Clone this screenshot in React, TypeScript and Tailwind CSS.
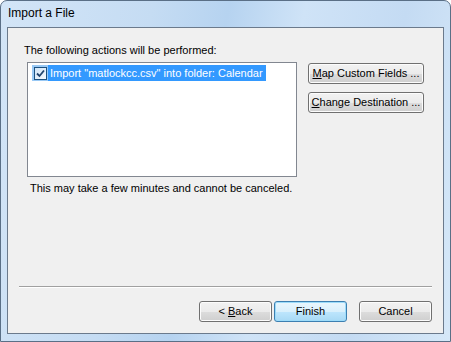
const FONT = { fontFamily: '"Liberation Sans", Arial, sans-serif' };

function Btn({ children, primary, w = "w-[73px]" }: { children: React.ReactNode; primary?: boolean; w?: string }) {
  return (
    <button
      type="button"
      className={`${w} h-[21px] whitespace-nowrap rounded-[3px] border p-0 text-[11px] leading-none text-black ${
        primary
          ? "border-[#3c7fb1] bg-[linear-gradient(#eaf6fd_0%,#d9f0fc_50%,#bee6fd_51%,#a7d9f5_100%)] shadow-[inset_0_0_0_1px_#9ddcfa]"
          : "border-[#707070] bg-[linear-gradient(#f2f2f2_0%,#ebebeb_50%,#dddddd_51%,#cfcfcf_100%)] shadow-[inset_0_0_0_1px_#fcfcfc]"
      }`}
    >
      {children}
    </button>
  );
}

export default function App() {
  return (
    <div
      style={FONT}
      className="w-[451px] h-[342px] flex flex-col rounded-t-[7px] border border-[#5a6f86] bg-[linear-gradient(100deg,#d3e5f7_0%,#c5dcf3_30%,#b6d3f0_45%,#cfe3f7_60%,#c4dbf3_80%,#d6e8f8_100%)] overflow-hidden"
    >
      <div className="h-[26px] shrink-0 pl-[7px] pt-[5px] text-[12px] leading-[15px] text-black">Import a File</div>
      <div className="flex-1 mx-[6px] mb-[7px] flex flex-col border border-[#6b7a8c] bg-[#f0f0f0] text-[11px] leading-[15px] text-black">
        <div className="mt-[15px] ml-[16px]">The following actions will be performed:</div>
        <div className="mt-[4px] ml-[19px] flex">
          <div className="w-[270px] h-[115px] border border-[#828790] bg-white pt-[2px] pl-[4px]">
            <div className="flex items-center h-[16px]">
              <div className="w-[16px] h-[16px] flex items-center justify-center bg-[#99c9f5]">
                <div className="w-[13px] h-[13px] border border-[#1c5180] bg-[linear-gradient(135deg,#cfe4f7,#f4f9fe)] flex items-center justify-center">
                  <svg width="9" height="9" viewBox="0 0 9 9">
                    <path d="M1 4.5 L3.5 7 L8 1.5" fill="none" stroke="#21446e" strokeWidth="1.8" />
                  </svg>
                </div>
              </div>
              <div className="h-[16px] bg-[#3399ff] text-white pl-[2px] pr-[3px] leading-[16px]">
                Import "matlockcc.csv" into folder: Calendar
              </div>
            </div>
          </div>
          <div className="ml-[11px] mt-[1px] flex flex-col gap-[8px]">
            <Btn w="w-[116px]">
              <u>M</u>ap Custom Fields ...
            </Btn>
            <Btn w="w-[116px]">
              <u>C</u>hange Destination ...
            </Btn>
          </div>
        </div>
        <div className="mt-[4px] ml-[22px]">This may take a few minutes and cannot be canceled.</div>
        <div className="flex-1" />
        <div className="mx-[11px] h-px bg-[#a0a0a0] border-b border-white box-content" />
        <div className="mt-[13px] mb-[11px] mr-[11px] flex justify-end">
          <Btn>
            &lt; <u>B</u>ack
          </Btn>
          <div className="w-[2px]" />
          <Btn primary>Finish</Btn>
          <div className="w-[12px]" />
          <Btn>Cancel</Btn>
        </div>
      </div>
    </div>
  );
}
